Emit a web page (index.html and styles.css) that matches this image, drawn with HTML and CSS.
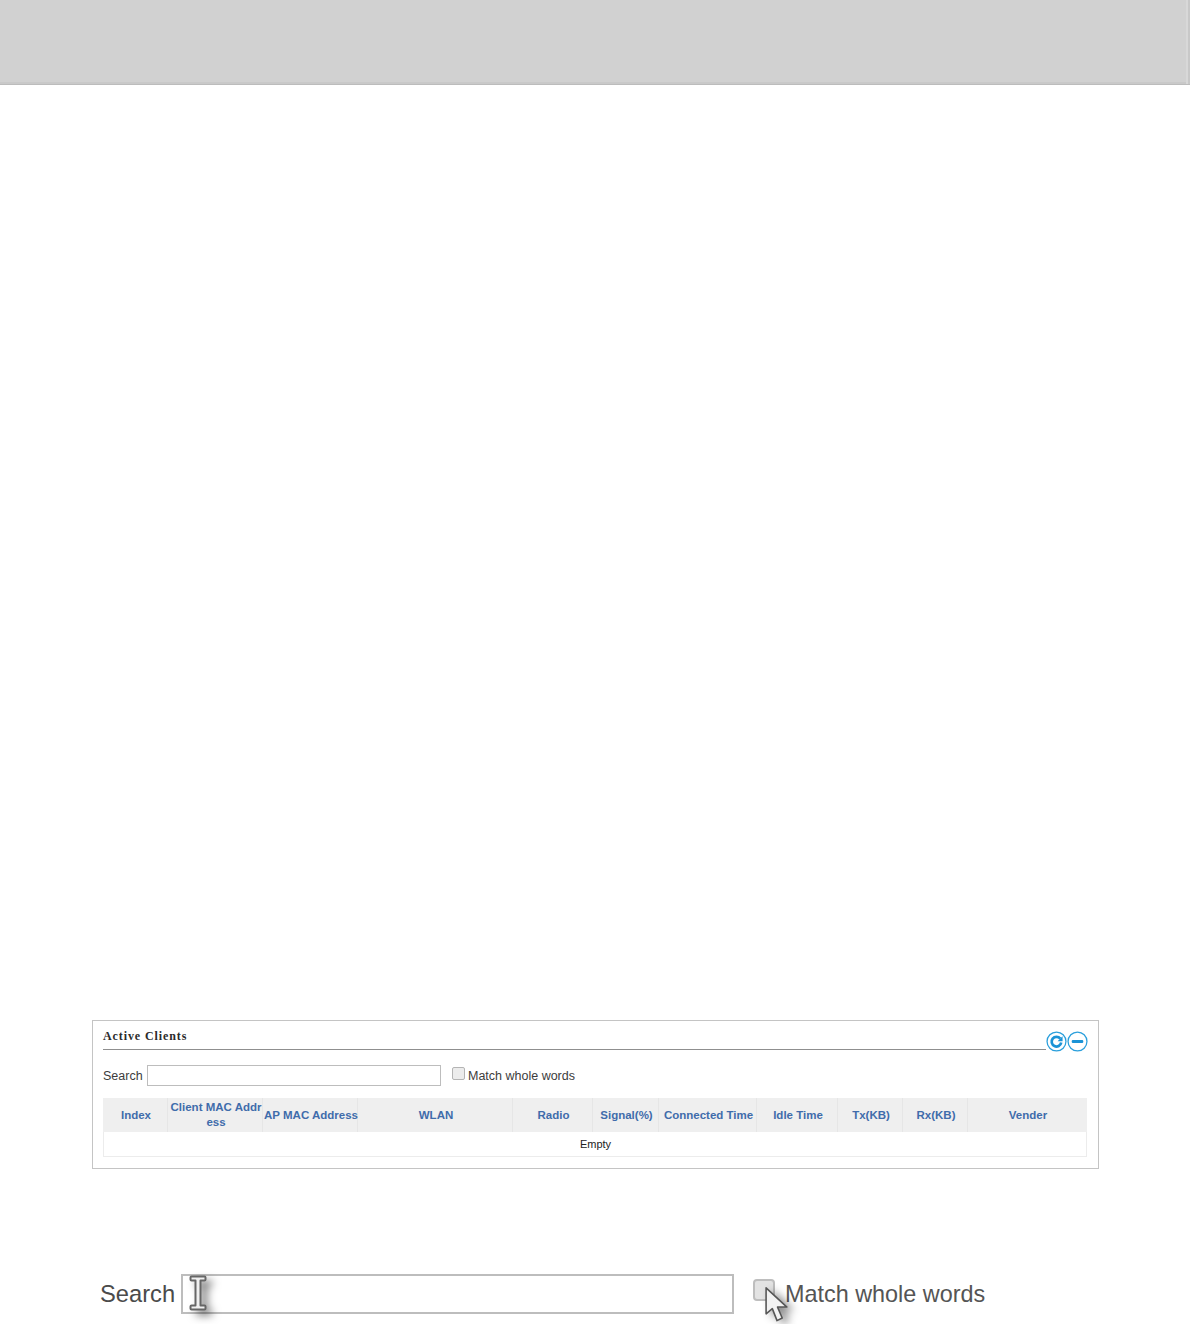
FILE: index.html
```html
<!DOCTYPE html>
<html lang="en">
<head>
<meta charset="utf-8">
<title>Active Clients</title>
<link rel="stylesheet" href="styles.css">
</head>
<body>
<header class="top-bar"></header>
<section class="panel">
  <div class="panel-head">
    <h2 class="panel-title">Active Clients</h2>
    <div class="panel-icons">
      <svg class="icon" viewBox="0 0 20 20" aria-hidden="true"><circle cx="10" cy="10" r="9" fill="#fff" stroke="#2a9fdc" stroke-width="1.200"/><path d="M13.600 7.300A4.600 4.600 0 1 0 14.500 11" fill="none" stroke="#1b93d6" stroke-width="2.600"/><path d="M15.800 5v4.800h-4.800z" fill="#1b93d6"/></svg>
      <svg class="icon" viewBox="0 0 20 20" aria-hidden="true"><circle cx="10" cy="10" r="9" fill="#fff" stroke="#2a9fdc" stroke-width="1.200"/><rect x="4.500" y="8.600" width="11" height="2.800" rx="1" fill="#1b93d6"/></svg>
    </div>
  </div>
  <div class="search-row">
    <label class="search-label" for="q">Search</label>
    <input class="search-input" id="q" type="text">
    <span class="check"></span>
    <span class="match">Match whole words</span>
  </div>
  <table class="clients">
    <colgroup>
      <col class="c1"><col class="c2"><col class="c3"><col class="c4"><col class="c5"><col class="c6"><col class="c7"><col class="c8"><col class="c9"><col class="c10"><col class="c11">
    </colgroup>
    <thead>
      <tr>
        <th>Index</th><th>Client MAC Address</th><th>AP MAC Address</th><th>WLAN</th><th>Radio</th><th>Signal(%)</th><th>Connected Time</th><th>Idle Time</th><th>Tx(KB)</th><th>Rx(KB)</th><th>Vender</th>
      </tr>
    </thead>
    <tbody>
      <tr><td colspan="11">Empty</td></tr>
    </tbody>
  </table>
</section>
<section class="big-search">
  <span class="big-label">Search</span>
  <span class="big-input">
    <svg class="ibeam" viewBox="0 0 18 36" aria-hidden="true"><path d="M2.500 1.500h13q1 0 1 1v2q0 1-1 1h-4v25h4q1 0 1 1v2q0 1-1 1h-13q-1 0-1-1v-2q0-1 1-1h4v-25h-4q-1 0-1-1v-2q0-1 1-1z" fill="#efefef" stroke="#666" stroke-width="2" stroke-linejoin="round"/></svg>
  </span>
  <span class="big-check">
    <svg class="arrow" viewBox="0 0 24 36" aria-hidden="true"><path d="M2 1.500v25l6-5 4.500 11.500 5-2.500-4.500-10.500h9z" fill="#f2f2f2" stroke="#555" stroke-width="1.500" stroke-linejoin="round"/></svg>
  </span>
  <span class="big-match">Match whole words</span>
</section>
</body>
</html>
```
FILE: styles.css
```css
* { box-sizing: border-box; }
html, body { margin: 0; padding: 0; background: #fff; }
body { height: 1324px; overflow: hidden; font-family: "Liberation Sans", Arial, sans-serif; color: #333; }

.top-bar {
  height: 85px;
  background: #d1d1d1;
  border-bottom: 1px solid #bcbcbc;
  box-shadow: inset -2px 0 0 #c8c8c8, inset -4px 0 0 #d8d8d8, inset 0 -2px 0 #c9c9c9;
}

.panel {
  width: 1007px;
  height: 149px;
  margin: 935px 0 0 92px;
  padding: 0 11px 0 10px;
  border: 1px solid #c4c4c4;
}
.panel-head { display: flex; height: 32px; }
.panel-title {
  flex: 1;
  margin: 0;
  height: 29px;
  padding-top: 8px;
  border-bottom: 1px solid #8f8f8f;
  font: bold 12px/15px "Liberation Serif", "Times New Roman", serif;
  letter-spacing: .9px;
  color: #2b2b2b;
}
.panel-icons { display: flex; width: 41px; padding-top: 10px; }
.icon { width: 21px; height: 21px; flex: none; }

.search-row { display: flex; align-items: center; height: 21px; margin-top: 12px; font-size: 12.5px; }
.search-label { width: 44px; color: #3c3c3c; }
.search-input { width: 294px; height: 21px; margin: 0; padding: 0; border: 1px solid #bdbdbd; background: #fff; }
.check {
  width: 13px; height: 13px; margin: -4px 0 0 11px;
  border: 1px solid #b4b4b4; border-radius: 2px; background: #ececec;
}
.match { margin-left: 3px; color: #3c3c3c; }

.clients { width: 984px; margin-top: 12px; border-collapse: separate; border-spacing: 0; table-layout: fixed; font-size: 11.5px; }
.c1 { width: 65px; } .c2 { width: 95px; } .c3 { width: 95px; } .c4 { width: 155px; }
.c5 { width: 80px; } .c6 { width: 66px; } .c7 { width: 98px; } .c8 { width: 81px; }
.c9 { width: 65px; } .c10 { width: 65px; } .c11 { width: 119px; }
.clients th {
  height: 34px;
  padding: 0 1px 0 2px;
  background: #efefef;
  box-shadow: inset -1px 0 0 #e6e6e6;
  color: #3f6cab;
  font-weight: bold;
  line-height: 15px;
  text-align: center;
  word-break: break-all;
}
.clients th:nth-child(3), .clients th:nth-child(7) { padding: 0 0 0 1px; word-break: normal; }
.clients th:last-child { box-shadow: none; }
.clients td {
  height: 25px;
  padding: 0 0 0 1px;
  border: 1px solid #ececec;
  border-top: 0;
  text-align: center;
  font-size: 11px;
  color: #222;
}

.big-search { display: flex; align-items: center; height: 40px; margin: 105px 0 0 100px; }
.big-label { width: 81px; font-size: 23.700px; color: #4b4b4b; }
.big-input {
  position: relative;
  width: 553px; height: 40px;
  border: 2px solid #bdbdbd;
  background: #fff;
}
.big-check {
  position: relative;
  width: 22px; height: 22px; margin: -9px 0 0 19px;
  border: 2px solid #bebebe; border-radius: 4px; background: #e3e3e3;
}
.big-match { margin-left: 10px; font-size: 23.400px; color: #555; }
.ibeam {
  position: absolute; left: 6px; top: -1px;
  width: 18px; height: 36px;
  filter: drop-shadow(6px 5px 4px rgba(0,0,0,.5));
}
.arrow {
  position: absolute; left: 9px; top: 5px;
  width: 25px; height: 38px;
  filter: drop-shadow(6px 3px 4px rgba(0,0,0,.45));
}
```
